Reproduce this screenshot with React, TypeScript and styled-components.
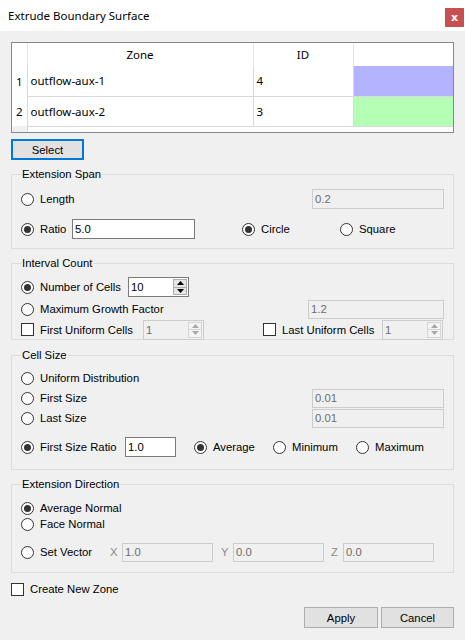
import React from "react";
import styled, { createGlobalStyle, css } from "styled-components";

const Global = createGlobalStyle`
  html, body { margin: 0; padding: 0; background: #f0f0f0; }
  * { box-sizing: border-box; }
`;

const UI = `"Liberation Sans", Arial, sans-serif`;
const SEGOE = `"Noto Sans", "Open Sans", sans-serif`;

const Window = styled.div`
  width: 465px;
  height: 640px;
  background: #f0f0f0;
  display: flex;
  flex-direction: column;
  font-family: ${UI};
  font-size: 11.3px;
  color: #000;
  overflow: hidden;
`;

const TitleBar = styled.div`
  height: 31px;
  flex: none;
  background: #fff;
  display: flex;
  align-items: center;
  justify-content: space-between;
  padding-left: 8px;
`;

const TitleText = styled.span`
  font-family: ${SEGOE};
  font-size: 11.5px;
  color: #000;
`;

const CloseButton = styled.div`
  width: 19px;
  height: 19px;
  margin-right: 1px;
  margin-top: 4px;
  background: #c75050;
  color: #fff;
  font-family: "DejaVu Sans", sans-serif;
  font-weight: bold;
  font-size: 11px;
  display: flex;
  align-items: center;
  justify-content: center;
  line-height: 1;
`;

const Content = styled.div`
  padding: 11px 11px 0 11px;
  display: flex;
  flex-direction: column;
`;

const GridFrame = styled.div`
  height: 91px;
  border: 1px solid #828790;
  background: #f0f0f0;
  overflow: hidden;
`;

const Table = styled.table`
  border-collapse: collapse;
  table-layout: fixed;
  width: 441px;
  font-family: ${SEGOE};
  font-size: 11.5px;
`;

const HeadCell = styled.th<{ $w: number; $last?: boolean }>`
  width: ${(p) => p.$w}px;
  height: 23px;
  padding: 0;
  background: #fff;
  font-weight: normal;
  text-align: center;
  border-right: ${(p) => (p.$last ? "none" : "1px solid #e5e5e5")};
`;

const RowHead = styled.td`
  height: 30px;
  padding: 0;
  background: #fff;
  text-align: center;
  border-right: 1px solid #d9d9d9;
`;

const Cell = styled.td<{ $bg?: string; $last?: boolean }>`
  height: 30px;
  padding: 0 0 0 3px;
  background: ${(p) => p.$bg ?? "#fff"};
  border-right: ${(p) => (p.$last ? "none" : "1px solid #d9d9d9")};
  border-bottom: 1px solid #d9d9d9;
  white-space: nowrap;
`;

const FillerHead = styled.td`
  height: 6px;
  padding: 0;
  background: #f0f0f0;
  border-right: 1px solid #d9d9d9;
`;

const Filler = styled.td`
  height: 6px;
  padding: 0;
  background: #fff;
`;

const PushButton = styled.button<{ $focus?: boolean; $w: number }>`
  width: ${(p) => p.$w}px;
  height: 21px;
  padding: 0;
  background: #e1e1e1;
  border: 1px solid #adadad;
  font-family: ${UI};
  font-size: 11.3px;
  color: #000;
  ${(p) =>
    p.$focus &&
    css`
      border: 2px solid #0078d7;
    `}
`;

const SelectRow = styled.div`
  margin-top: 6px;
  display: flex;
`;

const Group = styled.fieldset<{ $mt: number; $pt: number; $pb: number }>`
  margin: ${(p) => p.$mt}px 0 0 0;
  padding: ${(p) => p.$pt}px 9px ${(p) => p.$pb}px 9px;
  border: 1px solid #dcdcdc;
  min-width: 0;
`;

const Legend = styled.legend`
  padding: 0 1px;
  margin: 0;
  line-height: 14px;
  height: 14px;
  font-size: 11.3px;
`;

const Row = styled.div<{ $h: number; $mt?: number; $end?: boolean; $gap?: number }>`
  display: flex;
  align-items: center;
  height: ${(p) => p.$h}px;
  margin-top: ${(p) => p.$mt ?? 0}px;
  justify-content: ${(p) => (p.$end ? "flex-end" : "flex-start")};
  gap: ${(p) => p.$gap ?? 0}px;
`;

const OptionBox = styled.label<{ $w?: number; $ml?: number }>`
  display: flex;
  align-items: center;
  gap: 6px;
  flex: none;
  width: ${(p) => (p.$w ? `${p.$w}px` : "auto")};
  margin-left: ${(p) => p.$ml ?? 0}px;
  white-space: nowrap;
  line-height: 14px;
`;

const RadioDot = styled.span<{ $on?: boolean }>`
  width: 13px;
  height: 13px;
  flex: none;
  border-radius: 50%;
  border: 1px solid #333;
  background: #fff;
  display: flex;
  align-items: center;
  justify-content: center;
  &::after {
    content: "";
    width: 7px;
    height: 7px;
    border-radius: 50%;
    background: ${(p) => (p.$on ? "#333" : "transparent")};
  }
`;

const CheckSquare = styled.span`
  width: 13px;
  height: 13px;
  flex: none;
  border: 1px solid #333;
  background: #fff;
`;

const TextBox = styled.div<{ $w: number; $h?: number; $off?: boolean; $auto?: boolean; $ml?: number }>`
  width: ${(p) => p.$w}px;
  height: ${(p) => p.$h ?? 20}px;
  flex: none;
  margin-left: ${(p) => (p.$auto ? "auto" : `${p.$ml ?? 0}px`)};
  border: 1px solid ${(p) => (p.$off ? "#cccccc" : "#7a7a7a")};
  background: ${(p) => (p.$off ? "#f0f0f0" : "#fff")};
  color: ${(p) => (p.$off ? "#6d6d6d" : "#000")};
  padding-left: 2px;
  display: flex;
  align-items: center;
  justify-content: space-between;
  white-space: nowrap;
`;

const ArrowBox = styled.div<{ $off?: boolean }>`
  width: 14px;
  height: 16px;
  margin-right: 1px;
  border: 1px solid ${(p) => (p.$off ? "#d5d5d5" : "#adadad")};
  background: ${(p) => (p.$off ? "#f4f4f4" : "#e5e5e5")};
  display: flex;
  flex-direction: column;
`;

const ArrowHalf = styled.div<{ $off?: boolean; $top?: boolean }>`
  flex: 1;
  display: flex;
  align-items: center;
  justify-content: center;
  border-bottom: ${(p) => (p.$top ? `1px solid ${p.$off ? "#d5d5d5" : "#adadad"}` : "none")};
`;

const Axis = styled.span<{ $ml?: number }>`
  width: 12px;
  flex: none;
  margin-left: ${(p) => p.$ml ?? 0}px;
  color: #8a8a8a;
`;

const Radio = ({ label, on, w, ml }: { label: string; on?: boolean; w?: number; ml?: number }) => (
  <OptionBox $w={w} $ml={ml}>
    <RadioDot $on={on} />
    <span>{label}</span>
  </OptionBox>
);

const Check = ({ label, w, ml }: { label: string; w?: number; ml?: number }) => (
  <OptionBox $w={w} $ml={ml}>
    <CheckSquare />
    <span>{label}</span>
  </OptionBox>
);

const Tri = ({ up, off }: { up?: boolean; off?: boolean }) => (
  <svg width="7" height="4" viewBox="0 0 7 4">
    <polygon points={up ? "0,4 7,4 3.5,0" : "0,0 7,0 3.5,4"} fill={off ? "#a8a8a8" : "#000"} />
  </svg>
);

const Spin = ({ value, w, off, ml }: { value: string; w: number; off?: boolean; ml?: number }) => (
  <TextBox $w={w} $off={off} $ml={ml}>
    <span>{value}</span>
    <ArrowBox $off={off}>
      <ArrowHalf $off={off} $top>
        <Tri up off={off} />
      </ArrowHalf>
      <ArrowHalf $off={off}>
        <Tri off={off} />
      </ArrowHalf>
    </ArrowBox>
  </TextBox>
);

const zones = [
  { n: 1, name: "outflow-aux-1", id: "4", color: "#b3b3ff" },
  { n: 2, name: "outflow-aux-2", id: "3", color: "#b3ffb3" },
];

export default function App() {
  return (
    <Window>
      <Global />
      <TitleBar>
        <TitleText>Extrude Boundary Surface</TitleText>
        <CloseButton>x</CloseButton>
      </TitleBar>
      <Content>
        <GridFrame>
          <Table>
            <thead>
              <tr>
                <HeadCell $w={15} />
                <HeadCell $w={226}>Zone</HeadCell>
                <HeadCell $w={100}>ID</HeadCell>
                <HeadCell $w={100} $last />
              </tr>
            </thead>
            <tbody>
              {zones.map((z) => (
                <tr key={z.n}>
                  <RowHead>{z.n}</RowHead>
                  <Cell>{z.name}</Cell>
                  <Cell>{z.id}</Cell>
                  <Cell $bg={z.color} $last />
                </tr>
              ))}
              <tr>
                <FillerHead />
                <Filler />
                <Filler />
                <Filler />
              </tr>
            </tbody>
          </Table>
        </GridFrame>

        <SelectRow>
          <PushButton $w={73} $focus>
            Select
          </PushButton>
        </SelectRow>

        <Group $mt={7} $pt={7} $pb={8}>
          <Legend>Extension Span</Legend>
          <Row $h={22}>
            <Radio label="Length" />
            <TextBox $w={132} $off $auto>
              0.2
            </TextBox>
          </Row>
          <Row $h={22} $mt={8}>
            <Radio label="Ratio" on w={51} />
            <TextBox $w={123}>5.0</TextBox>
            <Radio label="Circle" on w={98} ml={47} />
            <Radio label="Square" />
          </Row>
        </Group>

        <Group $mt={7} $pt={7} $pb={0}>
          <Legend>Interval Count</Legend>
          <Row $h={20}>
            <Radio label="Number of Cells" on w={107} />
            <Spin value="10" w={61} />
          </Row>
          <Row $h={20} $mt={2}>
            <Radio label="Maximum Growth Factor" />
            <TextBox $w={136} $h={19} $off $auto>
              1.2
            </TextBox>
          </Row>
          <Row $h={19} $mt={1}>
            <Check label="First Uniform Cells" w={122} />
            <Spin value="1" w={61} off />
            <Check label="Last Uniform Cells" w={119} ml={59} />
            <Spin value="1" w={61} off />
          </Row>
        </Group>

        <Group $mt={8} $pt={6} $pb={12}>
          <Legend>Cell Size</Legend>
          <Row $h={20}>
            <Radio label="Uniform Distribution" />
          </Row>
          <Row $h={20}>
            <Radio label="First Size" />
            <TextBox $w={132} $h={19} $off $auto>
              0.01
            </TextBox>
          </Row>
          <Row $h={20}>
            <Radio label="Last Size" />
            <TextBox $w={132} $h={19} $off $auto>
              0.01
            </TextBox>
          </Row>
          <Row $h={20} $mt={9}>
            <Radio label="First Size Ratio" on w={104} />
            <TextBox $w={51}>1.0</TextBox>
            <Radio label="Average" on w={79} ml={18} />
            <Radio label="Minimum" w={83} />
            <Radio label="Maximum" />
          </Row>
        </Group>

        <Group $mt={7} $pt={9} $pb={10}>
          <Legend>Extension Direction</Legend>
          <Row $h={16}>
            <Radio label="Average Normal" on />
          </Row>
          <Row $h={16}>
            <Radio label="Face Normal" />
          </Row>
          <Row $h={20} $mt={10}>
            <Radio label="Set Vector" w={89} />
            <Axis>X</Axis>
            <TextBox $w={91} $h={19} $off>
              1.0
            </TextBox>
            <Axis $ml={8}>Y</Axis>
            <TextBox $w={91} $h={19} $off>
              0.0
            </TextBox>
            <Axis $ml={7}>Z</Axis>
            <TextBox $w={91} $h={19} $off>
              0.0
            </TextBox>
          </Row>
        </Group>

        <Row $h={16} $mt={8}>
          <Check label="Create New Zone" />
        </Row>

        <Row $h={21} $mt={10} $end $gap={3}>
          <PushButton $w={74}>Apply</PushButton>
          <PushButton $w={73}>Cancel</PushButton>
        </Row>
      </Content>
    </Window>
  );
}
